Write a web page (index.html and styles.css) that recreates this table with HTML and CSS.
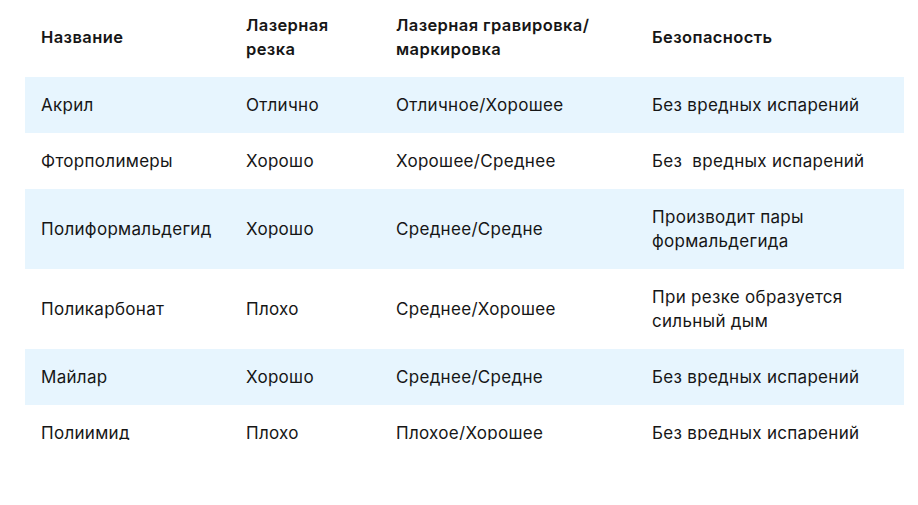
FILE: index.html
```html
<!DOCTYPE html>
<html lang="ru">
<head>
<meta charset="utf-8">
<title>Материалы</title>
<link rel="stylesheet" href="styles.css">
</head>
<body>
<div class="wrap">
<table class="materials">
  <colgroup>
    <col class="c1"><col class="c2"><col class="c3"><col class="c4">
  </colgroup>
  <thead>
    <tr>
      <th>Название</th>
      <th>Лазерная<br>резка</th>
      <th>Лазерная гравировка/<br>маркировка</th>
      <th>Безопасность</th>
    </tr>
  </thead>
  <tbody>
    <tr class="alt"><td>Акрил</td><td>Отлично</td><td>Отличное/Хорошее</td><td>Без вредных испарений</td></tr>
    <tr><td>Фторполимеры</td><td>Хорошо</td><td>Хорошее/Среднее</td><td>Без&nbsp; вредных испарений</td></tr>
    <tr class="alt"><td>Полиформальдегид</td><td>Хорошо</td><td>Среднее/Средне</td><td>Производит пары<br>формальдегида</td></tr>
    <tr><td>Поликарбонат</td><td>Плохо</td><td>Среднее/Хорошее</td><td>При резке образуется<br>сильный дым</td></tr>
    <tr class="alt"><td>Майлар</td><td>Хорошо</td><td>Среднее/Средне</td><td>Без вредных испарений</td></tr>
    <tr><td>Полиимид</td><td>Плохо</td><td>Плохое/Хорошее</td><td>Без вредных испарений</td></tr>
  </tbody>
</table>
</div>
</body>
</html>
```
FILE: styles.css
```css
html, body {
  margin: 0;
  padding: 0;
  background: #ffffff;
}
body {
  font-family: Inter, "Noto Sans", sans-serif;
  color: #161616;
}
.wrap {
  padding-left: 25px;
  height: 440px;
  overflow: hidden;
}
.materials {
  border-collapse: collapse;
  table-layout: fixed;
  width: 879px;
  font-size: 17px;
  line-height: 24px;
  letter-spacing: 0.3px;
}
.c1 { width: 205px; }
.c2 { width: 150px; }
.c3 { width: 256px; }
.c4 { width: 268px; }
.materials th {
  text-align: left;
  font-weight: 600;
  font-size: 16.5px;
  letter-spacing: 0.4px;
  padding: 13px 16px 16px;
  vertical-align: middle;
  white-space: nowrap;
}
.materials td {
  padding: 16px 16px;
  vertical-align: middle;
  font-weight: 400;
  white-space: nowrap;
}
.materials tr.alt td {
  background: #e7f5fe;
}
```
